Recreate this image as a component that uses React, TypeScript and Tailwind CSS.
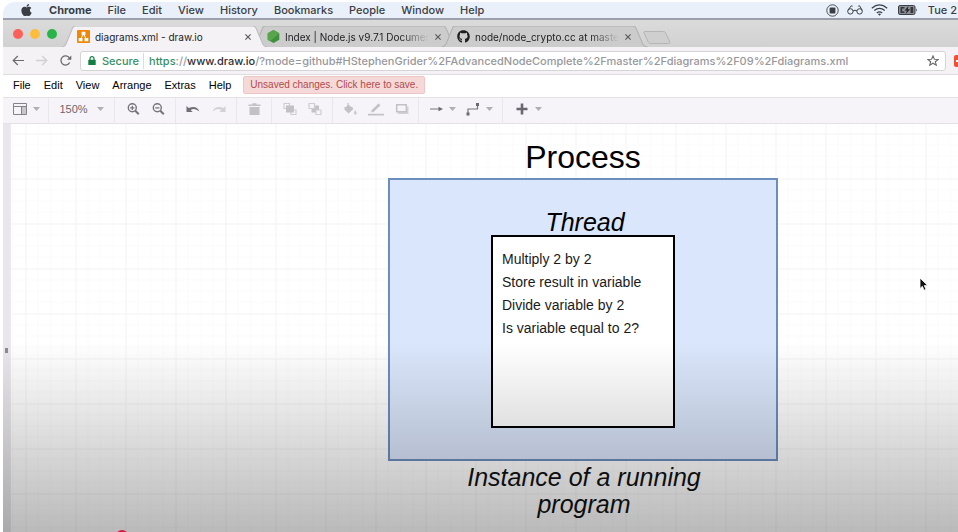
import type { ReactNode } from "react";
import { FaApple, FaGithub } from "react-icons/fa";

const systemMenus = ["File", "Edit", "View", "History", "Bookmarks", "People", "Window", "Help"];
const editorMenus = ["File", "Edit", "View", "Arrange", "Extras", "Help"];

function SystemBar() {
  return (
    <header className="flex h-[18px] shrink-0 items-center border-b-2 border-[#9aa0ae] bg-[#e9f0f9] pr-px pl-[17px] text-[11px] leading-4 font-medium text-[#3b3e45]">
      <button aria-label="Apple menu" className="mr-4">
        <FaApple className="h-[14px] w-[13px]" />
      </button>
      <nav className="flex gap-4">
        <button className="font-bold">Chrome</button>
        {systemMenus.map((name) => (
          <button key={name}>{name}</button>
        ))}
      </nav>
      <div className="ml-auto flex items-center">
        <svg className="mr-2 h-[13px] w-[13px]" viewBox="0 0 13 13" fill="none" stroke="currentColor">
          <circle cx="6.5" cy="6.5" r="5.7" strokeWidth="0.9" />
          <rect x="3.6" y="3.6" width="5.8" height="5.8" rx="1" fill="currentColor" stroke="none" />
        </svg>
        <svg className="mr-2 h-[10px] w-4" viewBox="0 0 16 10" fill="none" stroke="currentColor" strokeWidth="1">
          <circle cx="3.4" cy="6.4" r="2.7" />
          <circle cx="12.6" cy="6.4" r="2.7" />
          <path d="M6 6q2-1.6 4 0M.8 5.400L4.200.8l1.400.4M15.200 5.400L12.600.8l-1.400.4" />
        </svg>
        <svg className="mr-2.5 h-3 w-[17px]" viewBox="0 0 17 12" fill="none" stroke="currentColor" strokeWidth="1.3">
          <path d="M.8 4.2q7.7-6.600 15.400 0M3.300 6.600q5.200-4.400 10.400 0M5.800 8.900q2.700-2.200 5.400 0" />
          <path d="M7 10.200q1.500-1.200 3 0l-1.500 1.500z" fill="currentColor" stroke="none" />
        </svg>
        <svg className="mr-2.5 h-[10px] w-5" viewBox="0 0 20 10">
          <rect x=".5" y=".5" width="16.500" height="9" rx="1.500" fill="#8d9096" stroke="#3b3e45" />
          <path d="M18 3.200q1.700 1.800 0 3.600z" fill="#3b3e45" />
          <path d="M2.500 2h4v1.500h-2.300v3h2.300V8h-4zM12.500 2h2.700v6h-2.700z" fill="#34363c" />
          <path d="M10.500 1L6.500 5.500h2.200L7.800 9l4.400-4.700H9.800z" fill="#24262b" />
        </svg>
        <span>Tue 2</span>
      </div>
    </header>
  );
}

function CloseIcon() {
  return (
    <svg className="h-[6px] w-[6px]" viewBox="0 0 6 6" stroke="#55555a" strokeWidth="1.100">
      <path d="M.4.4l5.200 5.200M5.600.4L.4 5.600" />
    </svg>
  );
}

function Tab({ icon, title, active = false }: { icon: ReactNode; title: string; active?: boolean }) {
  return (
    <div className={`relative -mr-4 flex h-[21px] w-[206px] items-center pr-[17px] pl-[15px] ${active ? "z-10" : ""}`}>
      <svg className="absolute inset-0 h-full w-full" viewBox="0 0 205 21" preserveAspectRatio="none">
        <path
          d="M0 21Q3 20.500 4 18L10.500 2Q11.300 0 13 0H190Q192 0 193 2L200 18.500Q201.500 21 205 21"
          fill={active ? "#f4f2f4" : "#cdcccd"}
          stroke={active ? "#bdbcbe" : "#b1b0b2"}
        />
      </svg>
      <button role="tab" aria-selected={active} className="relative flex min-w-0 flex-1 items-center gap-[5px]">
        <span className="w-[13px] shrink-0">{icon}</span>
        <span className={`whitespace-nowrap ${active ? "" : "mask-r-from-80%"}`}>{title}</span>
      </button>
      <button aria-label={`Close ${title}`} className="relative">
        <CloseIcon />
      </button>
    </div>
  );
}

function TabStrip() {
  return (
    <div role="tablist" className="flex h-[27px] shrink-0 items-end bg-linear-to-b from-[#dcdbdc] to-[#d2d1d2] pl-[10px] text-[10px] leading-4 text-[#1c1c1f]">
      <div className="mr-[5px] flex gap-[7px] self-center">
        <span className="size-[10px] rounded-full bg-[#fb6158]" />
        <span className="size-[10px] rounded-full bg-[#fdbd3c]" />
        <span className="size-[10px] rounded-full bg-[#28b44a]" />
      </div>
      <Tab
        active
        title="diagrams.xml - draw.io"
        icon={
          <svg className="size-[13px]" viewBox="0 0 13 13">
            <rect width="13" height="13" rx="1" fill="#f08705" />
            <path d="M6.500 4L3.700 9M6.500 4l2.800 5" stroke="#fff" strokeWidth="1" />
            <path d="M4.600 1.800h3.800v3.200H4.600zM1.700 8h3.800v3.200H1.700zM7.500 8h3.800v3.200H7.500z" fill="#fff" />
          </svg>
        }
      />
      <Tab
        title="Index | Node.js v9.7.1 Documer"
        icon={
          <svg className="size-[13px]" viewBox="0 0 13 13">
            <path d="M6.500 0l5.800 3.200v6.600L6.500 13 .7 9.800V3.200z" fill="#3f8f3c" />
            <path d="M6.500 0l5.800 3.200L3 11.200.7 9.800V3.200z" fill="#58a64c" />
          </svg>
        }
      />
      <Tab title="node/node_crypto.cc at maste" icon={<FaGithub className="size-[13px] text-[#1e1e20]" />} />
      <button aria-label="New tab" className="mb-[3px] ml-[11px]">
        <svg className="h-[13px] w-7" viewBox="0 0 28 13">
          <path d="M2 .5h18.500q1.500 0 2.100 1.300l4.200 9.200q.6 1.500-1 1.500H7.500q-1.500 0-2.100-1.300L1 2Q.500.5 2 .5z" fill="#d0cfd0" stroke="#b5b4b6" />
        </svg>
      </button>
    </div>
  );
}

function AddressBar() {
  return (
    <div className="flex h-7 shrink-0 items-center border-b border-[#dedcde] bg-[#f4f2f4]">
      <div className="flex w-[77px] shrink-0 items-center gap-3 pl-[9px]">
        <button aria-label="Back">
          <svg className="h-[11px] w-[12px]" viewBox="0 0 12 11" fill="none" stroke="#6a6a6e" strokeWidth="1.200">
            <path d="M12 5.500H1.200M5.800 1L1.200 5.500 5.800 10" />
          </svg>
        </button>
        <button aria-label="Forward">
          <svg className="h-[11px] w-[12px]" viewBox="0 0 12 11" fill="none" stroke="#d0cfd1" strokeWidth="1.300">
            <path d="M0 5.500h10.800M6.200 1l4.600 4.500L6.200 10" />
          </svg>
        </button>
        <button aria-label="Reload">
          <svg className="h-[11px] w-[12px]" viewBox="0 0 12 11" fill="none" stroke="#6a6a6e" strokeWidth="1.300">
            <path d="M9.700 7.500A4.600 4.600 0 1 1 9.400 2.900" />
            <path d="M11.300.4v4.300H7z" fill="#6a6a6e" stroke="none" />
          </svg>
        </button>
      </div>
      <div className="flex h-5 min-w-0 flex-1 items-center rounded-[3px] border border-[#d6d4d6] bg-white pr-1.5 pl-[7px] text-[11px] leading-4 font-medium">
        <svg className="mr-1.5 h-[9px] w-2" viewBox="0 0 8 9">
          <path d="M2 4.500V2.700a2 2 0 0 1 4 0v1.800" fill="none" stroke="#127f42" strokeWidth="1.200" />
          <rect x=".3" y="3.800" width="7.400" height="5.200" rx=".6" fill="#127f42" />
        </svg>
        <span className="border-r border-[#dcdcdc] pr-1 text-[#3a8f5f]">Secure</span>
        <label htmlFor="url" className="flex pl-[5px]">
          <span className="text-[#3a8f5f]">https</span>
          <span className="text-[#9a9a9e]">://</span>
          <span className="text-[#303034]">www.draw.io</span>
        </label>
        <input
          id="url"
          className="min-w-0 flex-1 bg-transparent text-[#98989c] outline-none"
          defaultValue="/?mode=github#HStephenGrider%2FAdvancedNodeComplete%2Fmaster%2Fdiagrams%2F09%2Fdiagrams.xml"
        />
        <button aria-label="Bookmark this page">
          <svg className="h-[11px] w-3" viewBox="0 0 12 11" fill="none" stroke="#6a6a6e" strokeWidth="1.100">
            <path d="M6 .9l1.400 3.300 3.800.2-2.900 2.300 1 3.500L6 8.200l-3.300 2 1-3.500L.8 4.400l3.800-.2z" />
          </svg>
        </button>
      </div>
      <button aria-label="Extension" className="ml-2 h-3 w-1 shrink-0 overflow-hidden rounded-l-[2px] bg-[#ee5034]">
        <span className="mt-px ml-0.5 block h-0.5 w-0.5 bg-white" />
      </button>
    </div>
  );
}

function EditorMenu() {
  return (
    <div className="flex h-[22px] shrink-0 items-center bg-white pb-0.5 pl-[10px] font-['Liberation_Sans',Arial,sans-serif] text-[11px] leading-4 text-black">
      <nav className="mr-3 flex gap-[13px]">
        {editorMenus.map((name) => (
          <button key={name}>{name}</button>
        ))}
      </nav>
      <button className="h-[18px] rounded-[2px] border border-[#efc6c6] bg-[#f5d9d9] px-[6px] text-[10px] text-[#b04b4b]">
        Unsaved changes. Click here to save.
      </button>
    </div>
  );
}

function Caret() {
  return (
    <svg className="h-[4px] w-[7px] shrink-0" viewBox="0 0 7 4">
      <path d="M0 0h7L3.500 4z" fill="#b0aeb2" />
    </svg>
  );
}

function Tool({ label, children, caret = false }: { label: string; children: ReactNode; caret?: boolean }) {
  return (
    <button aria-label={label} className="flex items-center gap-[5px]">
      <svg className="h-[14px] w-4" viewBox="0 0 16 14" fill="none">
        {children}
      </svg>
      {caret && <Caret />}
    </button>
  );
}

function Group({ width, children }: { width: string; children: ReactNode }) {
  return <div className={`flex h-full shrink-0 items-center justify-center border-r border-[#e9e7eb] pb-[3px] ${width}`}>{children}</div>;
}

function EditorToolbar() {
  return (
    <div className="flex h-[27px] shrink-0 items-center border-y border-[#e4e2e6] bg-[#f6f4f8]">
      <Group width="w-[46px]">
        <Tool label="Panels" caret>
          <path d="M1.500 1.500h13v11h-13zM1.500 4.500h13M9.500 4.500v8" stroke="#858388" />
          <path d="M10 5h4v7h-4z" fill="#c9c7cc" />
        </Tool>
      </Group>
      <Group width="w-[66px]">
        <label className="flex items-center text-[11px] text-[#6a686d]">
          <select aria-label="Zoom" defaultValue="150" className="w-[37px] appearance-none bg-transparent font-['Liberation_Sans',Arial,sans-serif] leading-4 outline-none">
            <option value="150">150%</option>
            <option value="100">100%</option>
          </select>
          <Caret />
        </label>
      </Group>
      <Group width="w-[61px] gap-[9px]">
        <Tool label="Zoom in">
          <circle cx="7.300" cy="5.800" r="4" stroke="#76747a" strokeWidth="1.400" />
          <path d="M10.300 8.800l3.500 3.500" stroke="#76747a" strokeWidth="2" />
          <path d="M5.200 5.800h4.200M7.300 3.700v4.200" stroke="#76747a" strokeWidth="1.200" />
        </Tool>
        <Tool label="Zoom out">
          <circle cx="7.300" cy="5.800" r="4" stroke="#76747a" strokeWidth="1.400" />
          <path d="M10.300 8.800l3.500 3.500" stroke="#76747a" strokeWidth="2" />
          <path d="M5.200 5.800h4.200" stroke="#76747a" strokeWidth="1.200" />
        </Tool>
      </Group>
      <Group width="w-[61px] gap-2.5">
        <Tool label="Undo">
          <path d="M1.500 4v6h6.200L5.600 8q4-2.800 8.800 1.500Q11.500 3 3.700 6.100z" fill="#727076" />
        </Tool>
        <Tool label="Redo">
          <path d="M14.500 4v6H8.300l2.100-2q-4-2.800-8.800 1.500Q4.500 3 12.300 6.100z" fill="#d3d1d6" />
        </Tool>
      </Group>
      <Group width="w-[35px]">
        <Tool label="Delete">
          <path d="M2.500 2.500h4V1.300h4v1.200h4V4h-12zM3.500 5h10v8h-10z" fill="#c3c1c6" />
        </Tool>
      </Group>
      <Group width="w-[61px] gap-[9px]">
        <Tool label="To front">
          <path d="M2 1.500h5.500v5H2zM9 8h5v4.500H9z" stroke="#cfcdd2" strokeWidth="1.200" />
          <path d="M4 3.500h8v7H4z" fill="#c3c1c6" />
        </Tool>
        <Tool label="To back">
          <path d="M4.500 3.500h7.500v7H4.500z" fill="#c3c1c6" />
          <path d="M2 1.500h5.500v5H2zM9 8h5v4.500H9z" fill="#f6f4f8" stroke="#cfcdd2" strokeWidth="1.200" />
        </Tool>
      </Group>
      <Group width="w-[86px] gap-[10px]">
        <Tool label="Fill colour">
          <path d="M6.500 2.500L11.500 7 6.500 11.500 2 7z" fill="#c3c1c6" />
          <path d="M6 1v4M2.500 5.500h8" stroke="#c3c1c6" strokeWidth="1.200" />
          <path d="M13.300 8q2.700 4.500 0 4.500t0-4.500z" fill="#c9c7cc" />
        </Tool>
        <Tool label="Line colour">
          <path d="M-.5 12.700h17" stroke="#c3c1c6" strokeWidth="1.800" />
          <path d="M3 10.500l.8-2.600L10.500 1.500l2 1.700L5.800 9.800z" fill="#c3c1c6" />
        </Tool>
        <Tool label="Shadow">
          <path d="M4 4.500h10.500V12H4z" fill="#d3d1d6" />
          <path d="M2.700 2.700h9.600v7.100H2.700z" fill="#f6f4f8" stroke="#c3c1c6" strokeWidth="1.500" />
        </Tool>
      </Group>
      <Group width="w-[84px] gap-[9px]">
        <Tool label="Connection" caret>
          <path d="M2 7h9" stroke="#78767c" strokeWidth="1.200" />
          <path d="M10.500 4.800L15 7l-4.500 2.200z" fill="#6c6a70" />
        </Tool>
        <Tool label="Waypoints" caret>
          <path d="M3 11.500V7h9.500V3" stroke="#78767c" strokeWidth="1.200" />
          <path d="M1.500 10.500h3v3h-3zM11 1h3v3h-3z" fill="#6c6a70" />
        </Tool>
      </Group>
      <Group width="w-[50px] border-r-0">
        <Tool label="Insert" caret>
          <path d="M2.500 7h11M8 1.500v11" stroke="#6a686e" strokeWidth="2.600" />
        </Tool>
      </Group>
    </div>
  );
}

function Grid() {
  return (
    <svg className="absolute inset-0 h-full w-full" aria-hidden="true">
      <defs>
        <pattern id="cell" x="14.500" y="9.500" width="50" height="45" patternUnits="userSpaceOnUse">
          <path d="M12.500 0v45M25 0v45M37.500 0v45M0 11.250h50M0 22.500h50M0 33.750h50" stroke="#fbfafb" strokeWidth="1" />
          <path d="M0 0v45M0 0h50" stroke="#f4f2f4" strokeWidth="2" />
        </pattern>
      </defs>
      <rect width="100%" height="100%" fill="url(#cell)" />
    </svg>
  );
}

function Canvas() {
  return (
    <main className="relative flex min-h-[408px] flex-1 overflow-hidden">
      <div className="flex w-2 shrink-0 items-center justify-center border-r border-[#eceaee] bg-[#e9e7eb]">
        <span className="mt-11 h-[5px] w-[3px] bg-[#8d8b90]" />
      </div>
      <div className="relative flex-1 overflow-hidden bg-white font-['Liberation_Sans',Arial,sans-serif] text-black">
        <Grid />
        <h1 className="absolute top-[15px] left-[377px] w-[390px] text-center text-[32px] leading-9">Process</h1>
        <section className="absolute top-[54px] left-[377px] flex h-[283px] w-[390px] flex-col items-center border-2 border-[#6c8ebf] bg-[#dae6fb] pt-[30px]">
          <h2 className="pl-1 text-[25px] leading-[25px] italic">Thread</h2>
          <div className="h-[193px] w-[184px] border-[2px] border-black bg-white px-[9px] pt-[11px] text-[14px] leading-[23px] text-[#1a1a1a]">
            <p>Multiply 2 by 2</p>
            <p>Store result in variable</p>
            <p>Divide variable by 2</p>
            <p>Is variable equal to 2?</p>
          </div>
        </section>
        <p className="absolute top-[340px] left-[448px] w-[250px] text-center text-[25px] leading-[27px] text-[#111] italic">
          Instance of a running program
        </p>
        <svg className="absolute top-[153px] left-[908px] h-[15px] w-[10px]" viewBox="0 0 10 15">
          <path d="M1 1v10.500l2.400-2.200 1.700 3.900 1.900-.8-1.700-3.800h3.400z" fill="#111" stroke="#fff" strokeWidth=".8" />
        </svg>
      </div>
      <div className="pointer-events-none absolute inset-x-0 bottom-0 h-[190px] bg-linear-to-b from-transparent to-black/27" />
      <span className="absolute -bottom-[10px] left-[113px] size-3 rounded-full bg-[#e0123c]" />
    </main>
  );
}

export default function App() {
  return (
    <div className="min-h-screen bg-white pt-0.5 pl-[3px] font-['Inter','Liberation_Sans',sans-serif]">
      <div className="flex min-h-[calc(100vh-2px)] flex-col overflow-hidden rounded-tl-[12px]">
        <SystemBar />
        <TabStrip />
        <AddressBar />
        <EditorMenu />
        <EditorToolbar />
        <Canvas />
      </div>
    </div>
  );
}
